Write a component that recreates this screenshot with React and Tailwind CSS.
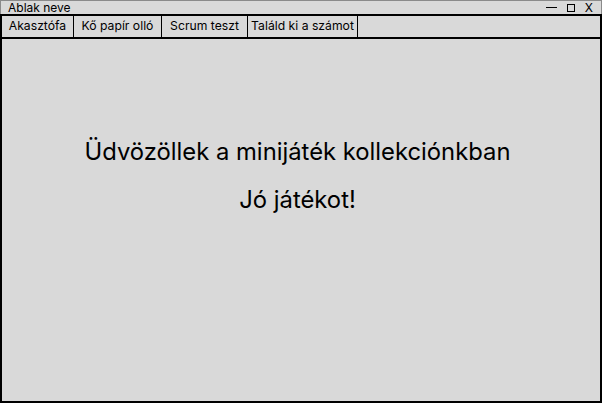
import React, { useState } from "react";

/*
    Minijáték kollekció - főablak
    Címsor, fülek és üdvözlő szöveg
*/

const tabs = [
  { name: "Akasztófa", width: "w-[72px]" },
  { name: "Kő papír olló", width: "w-[88px]" },
  { name: "Scrum teszt", width: "w-[86px]" },
  { name: "Találd ki a számot", width: "w-[110px]" },
];

export default function App() {
  const [active, setActive] = useState(null);

  return (
    <div className="w-[602px] h-[403px] flex flex-col bg-[#d9d9d9] font-['Inter',sans-serif] text-black">
      {/* Title bar */}
      <div className="h-[14px] flex items-center justify-between border-t border-x border-[#8a8a8a] pl-[7px] pr-[8px] text-[12px] leading-none">
        <span>Ablak neve</span>
        <div className="flex items-center gap-[10px]">
          <span className="block w-[11px] h-px bg-black" />
          <span className="block w-[8px] h-[8px] border border-black" />
          <span className="text-[12px] leading-none">X</span>
        </div>
      </div>

      {/* Tabs */}
      <div className="h-[25px] flex border-2 border-black">
        {tabs.map((tab) => (
          <button
            key={tab.name}
            onClick={() => setActive(tab.name)}
            className={`${tab.width} h-full border-r border-black text-[12.2px] leading-none text-center whitespace-nowrap ${
              active === tab.name ? "bg-[#cfcfcf]" : ""
            }`}
          >
            {tab.name}
          </button>
        ))}
      </div>

      {/* Content */}
      <div className="flex-1 flex flex-col items-center border-2 border-t-0 border-black pt-[98px] pr-[7px] gap-[19px]">
        <p className="text-[23.8px] leading-[29px]">
          Üdvözöllek a minijáték kollekciónkban
        </p>
        <p className="text-[23.8px] leading-[29px]">Jó játékot!</p>
      </div>
    </div>
  );
}
